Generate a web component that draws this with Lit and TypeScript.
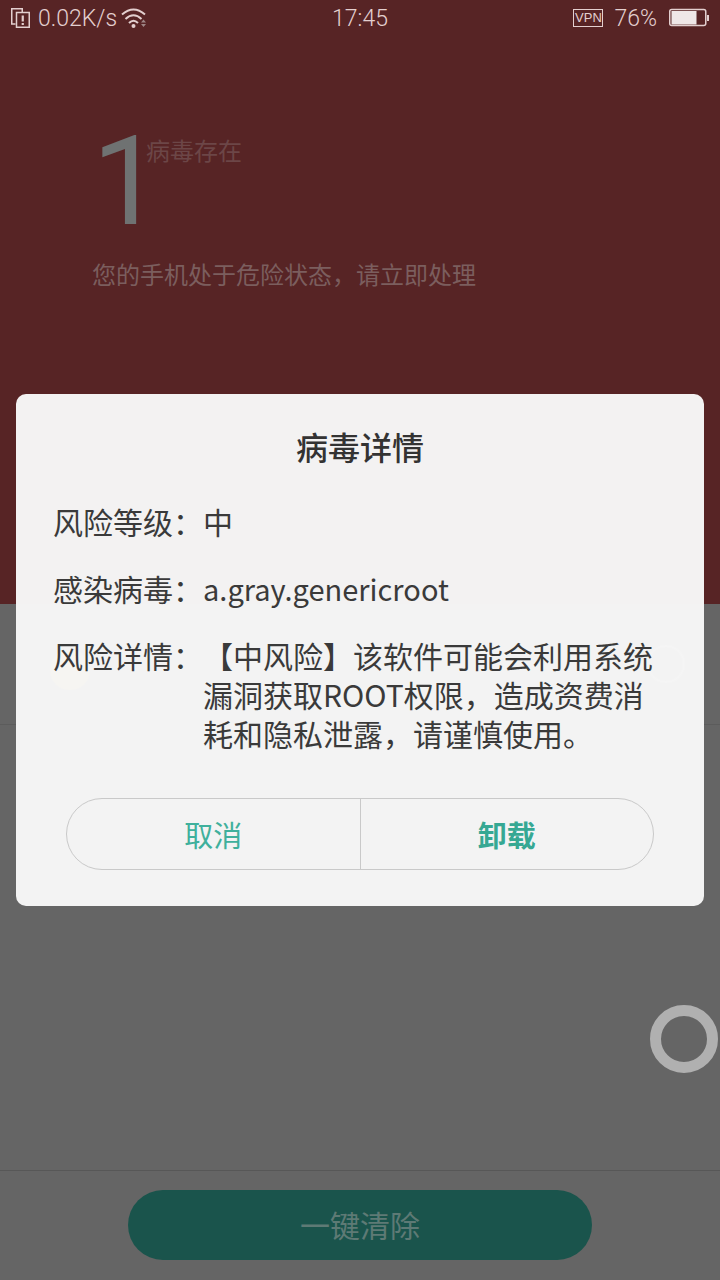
import { LitElement, html, css } from "lit";
import { customElement } from "lit/decorators.js";

const SANS = css`"Noto Sans CJK SC", "Noto Sans", sans-serif`;

@customElement("app-root")
export class AppRoot extends LitElement {
  static styles = css`
    :host { display: block; width: 720px; height: 1280px; position: relative; overflow: hidden; font-family: ${SANS}; background: #656565; }
    .page { width: 720px; height: 1280px; display: flex; flex-direction: column; }
    .hero { height: 604px; background: #572425; display: flex; flex-direction: column; flex: none; }
    .status { height: 36px; display: flex; align-items: center; justify-content: space-between; padding: 0 11px; color: #e3cfcf; font-family: Roboto, sans-serif; font-size: 23px; font-weight: 300; position: relative; }
    .status .left, .status .right { display: flex; align-items: center; }
    .status .left svg:first-child { margin-right: 8px; }
    .status .left .wifi { margin-left: 4px; }
    .status .right .pct { margin: 0 12px 0 11px; }
    .time { position: absolute; left: 0; right: 0; text-align: center; }
    .vpn { width: 30px; height: 18px; box-sizing: border-box; border: 1px solid #e3cfcf; font-size: 13px; line-height: 16px; text-align: center; font-weight: 400; font-family: "Liberation Sans", sans-serif; }
    .summary { padding: 96px 0 0 92px; }
    .count { display: flex; align-items: flex-start; gap: 54px; height: 100px; }
    .num { font-family: Roboto, sans-serif; font-weight: 400; font-size: 124px; line-height: 100px; color: #6f7272; letter-spacing: -70px; width: 0; }
    .unit { margin-left: 0; font-size: 24px; line-height: 36px; color: #6c4647; }
    .desc { margin-top: 25px; font-size: 24px; line-height: 34px; color: #7b5e5e; }
    .body { flex: 1; display: flex; flex-direction: column; }
    .row { height: 121px; flex: none; box-sizing: border-box; border-bottom: 1px solid #5c5c5c; display: flex; align-items: center; padding: 0 35px 0 50px; justify-content: space-between; }
    .dot { width: 40px; height: 40px; border-radius: 50%; background: #d8a300; margin-top: 12px; }
    .ring { width: 34px; height: 34px; border: 2px solid #9a9a9a; border-radius: 50%; }
    .spacer { flex: 1; }
    .bottom { height: 110px; flex: none; border-top: 1px solid #575757; display: flex; justify-content: center; padding-top: 19px; box-sizing: border-box; }
    .clean { width: 464px; height: 70px; border-radius: 35px; background: #1a544c; color: #5e7a75; font-size: 30px; padding-bottom: 2px; box-sizing: border-box; display: flex; align-items: center; justify-content: center; }
    .float { position: absolute; left: 650px; top: 1005px; width: 68px; height: 68px; box-sizing: border-box; border: 11px solid #b0b0b0; border-radius: 50%; }
    .dialog { position: absolute; left: 16px; top: 394px; width: 688px; height: 512px; box-sizing: border-box; background: rgba(246,246,246,0.985); border-radius: 10px; padding: 29px 0 36px; display: flex; flex-direction: column; color: #3a3a3a; }
    .title { font-size: 32px; font-weight: 500; line-height: 46px; text-align: center; color: #333; }
    .fields { margin-top: 33px; display: flex; flex-direction: column; gap: 28px; padding-left: 37px; }
    .field { display: grid; grid-template-columns: 150px 1fr; font-size: 30px; line-height: 39px; white-space: nowrap; }
    .field .latin { font-size: 29px; }
    .actions { margin: auto 50px 0; display: flex; height: 72px; box-sizing: border-box; border: 1px solid #c9c9c9; border-radius: 36px; }
    .actions div { flex: 1; display: flex; align-items: center; justify-content: center; font-size: 29px; color: #3fb09c; }
    .actions div + div { border-left: 1px solid #c9c9c9; font-weight: 700; color: #36a893; }
  `;

  render() {
    return html`
      <div class="page">
        <section class="hero">
          <div class="status">
            <div class="left">
              <svg width="19" height="20" viewBox="0 0 19 20" fill="none" stroke="#e3cfcf" stroke-width="1.5">
                <path d="M4.500 16H.75V.75h10.500V4" />
                <rect x="5.500" y="4.500" width="12.750" height="14.750" />
                <path d="M11.750 7.500v6M11.750 15v2" stroke-width="2.200" />
              </svg>
              <span>0.02K/s</span>
              <svg class="wifi" width="26" height="20" viewBox="0 0 26 20" fill="none" stroke="#e3cfcf" stroke-width="2">
                <path d="M1 6.500Q12.500 -3.500 24 6.500M4.500 11Q12.500 3.500 20.500 11M8 15Q12.500 10.500 17 15" />
                <circle cx="12.500" cy="18" r="2" fill="#e3cfcf" stroke="none" />
                <path d="M20 14.500l2.500-3 2.500 3zM20 16l2.500 3 2.500-3z" fill="#9d8585" stroke="none" />
              </svg>
            </div>
            <div class="time">17:45</div>
            <div class="right">
              <div class="vpn">VPN</div>
              <span class="pct">76%</span>
              <svg width="40" height="20" viewBox="0 0 40 20">
                <rect x="0.750" y="1.500" width="36" height="16" rx="2" fill="none" stroke="#e3cfcf" stroke-width="1.500" />
                <rect x="2.500" y="3" width="25" height="13.500" fill="#efe7e7" />
                <rect x="38" y="7" width="2" height="6" fill="#e3cfcf" />
              </svg>
            </div>
          </div>
          <div class="summary">
            <div class="count"><span class="num">1</span><span class="unit">病毒存在</span></div>
            <div class="desc">您的手机处于危险状态，请立即处理</div>
          </div>
        </section>
        <section class="body">
          <div class="row"><span class="dot"></span><span class="ring"></span></div>
          <div class="spacer"></div>
          <div class="bottom"><div class="clean">一键清除</div></div>
        </section>
      </div>
      <div class="float"></div>
      <div class="dialog">
        <div class="title">病毒详情</div>
        <div class="fields">
          <div class="field"><span>风险等级：</span><span>中</span></div>
          <div class="field"><span>感染病毒：</span><span class="latin">a.gray.genericroot</span></div>
          <div class="field"><span>风险详情：</span><span>【中风险】该软件可能会利用系统<br />漏洞获取ROOT权限，造成资费消<br />耗和隐私泄露，请谨慎使用。</span></div>
        </div>
        <div class="actions"><div>取消</div><div>卸载</div></div>
      </div>
    `;
  }
}
